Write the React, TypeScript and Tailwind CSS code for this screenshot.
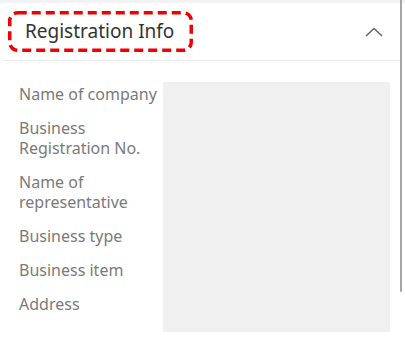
export default function App() {
  const rows: string[][] = [
    ["Name of company"],
    ["Business", "Registration No."],
    ["Name of", "representative"],
    ["Business type"],
    ["Business item"],
    ["Address"],
  ];

  return (
    <div className="relative w-[405px] h-[349px] bg-white overflow-hidden" style={{ fontFamily: '"Noto Sans", sans-serif' }}>
      {/* top band */}
      <div className="h-[3px] bg-[#f2f2f2]" />

      {/* header */}
      <div className="flex items-center justify-between h-[58px] pl-[5px] pr-[17px] ml-[3px] mr-[5px] border-b border-[#ececec]">
        <div className="relative flex items-center h-[41px] w-[185px] mt-[-1px] pl-[17px]">
          <svg className="absolute inset-0" width="185" height="41" viewBox="0 0 185 41" fill="none">
            <rect x="1.75" y="1.75" width="181.5" height="37.5" rx="8" stroke="#f00000" strokeWidth="3.5" strokeDasharray="9 5" />
          </svg>
          <span className="text-[19px] text-[#333] leading-none">Registration Info</span>
        </div>
        <svg width="18" height="10" viewBox="0 0 18 10" fill="none">
          <path d="M1 9 L9 1.5 L17 9" stroke="#666" strokeWidth="1.5" />
        </svg>
      </div>

      {/* body */}
      <div className="flex pl-[19px] pt-[21px]">
        <div className="flex flex-col gap-[14px] w-[144px] pt-[2px]">
          {rows.map((lines, i) => (
            <div key={i} className="flex flex-col">
              {lines.map((l) => (
                <span key={l} className="text-[16px] leading-[20px] text-[#7a7a7a] whitespace-nowrap">
                  {l}
                </span>
              ))}
            </div>
          ))}
        </div>
        <div className="w-[227px] h-[250px] bg-[#f0f0f0]" />
      </div>

      {/* scrollbar */}
      <div className="absolute right-[3px] top-0 w-[2px] h-[292px] bg-[#a6a6a6] rounded-b" />
    </div>
  );
}
